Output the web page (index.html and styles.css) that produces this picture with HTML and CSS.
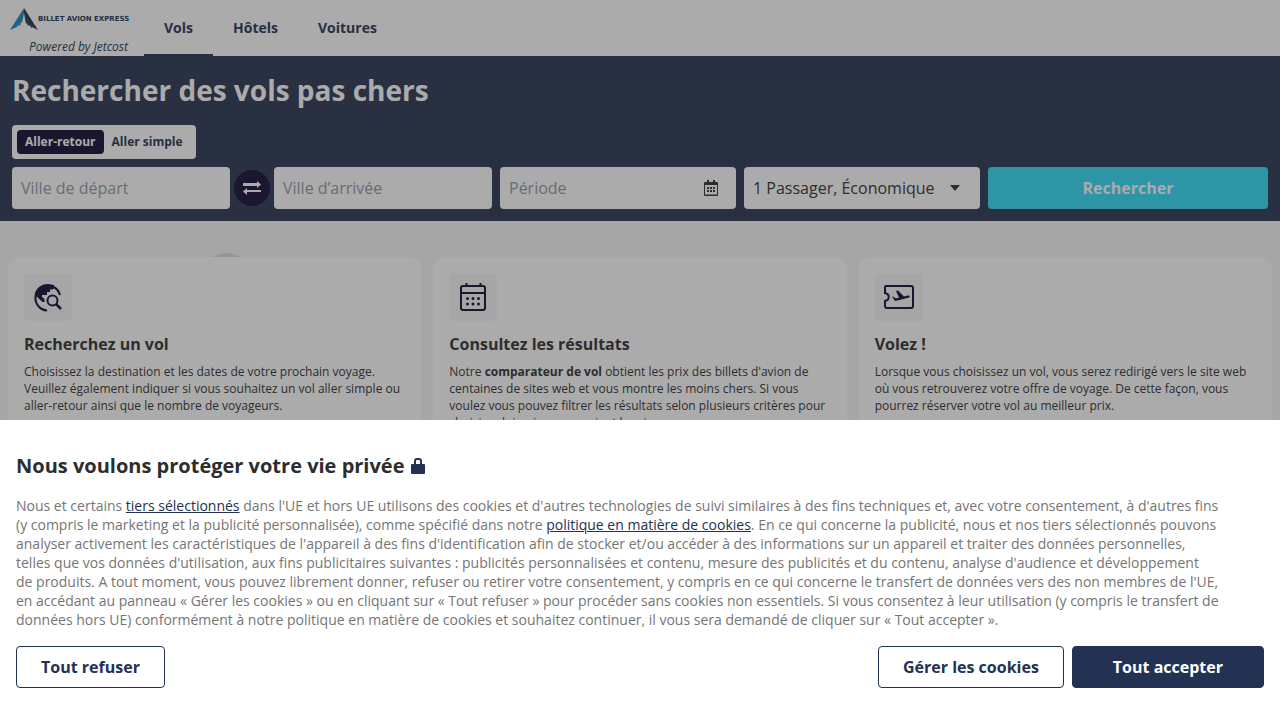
FILE: index.html
```html
<!DOCTYPE html>
<html lang="fr">
<head>
    <meta charset="UTF-8">
    <meta name="viewport" content="width=device-width, initial-scale=1.0">
    <title>Billet Avion Express</title>
    <link rel="stylesheet" href="styles.css">
</head>
<body>
    <header class="header">
        <a href="#" class="brand">
            <span class="logo">
                <svg class="logo-mark" viewBox="0 0 28 22" aria-hidden="true">
                    <path fill="#1687bd" d="M14 0 L0 22 L7 19 L8 17 L10 18 L11 14 L12 15 L14 5z"/>
                    <path fill="#233152" d="M14 0 L28 22 L22 19 L21 20 L20 17 L18 18 L17 15 L16 16 L14 5z"/>
                </svg>
                <span class="logo-name">BILLET AVION EXPRESS</span>
            </span>
            <span class="powered">Powered by Jetcost</span>
        </a>
        <nav class="nav">
            <a href="#" class="active">Vols</a>
            <a href="#">Hôtels</a>
            <a href="#">Voitures</a>
        </nav>
    </header>

    <section class="search">
        <h1>Rechercher des vols pas chers</h1>
        <form>
            <div class="trip-type">
                <label><input type="radio" name="trip" checked><span>Aller-retour</span></label>
                <label><input type="radio" name="trip"><span>Aller simple</span></label>
            </div>
            <div class="search-row">
                <div class="route">
                    <input class="field" type="text" placeholder="Ville de départ" aria-label="Ville de départ">
                    <button type="button" class="swap" aria-label="Inverser les villes">
                        <svg viewBox="0 0 18 14" fill="currentColor" aria-hidden="true">
                            <path d="M0 2h14V0l4 3.500L14 7V5H0z"/>
                            <path d="M18 9H4V7L0 10.500 4 14v-3h14z"/>
                        </svg>
                    </button>
                    <input class="field" type="text" placeholder="Ville d’arrivée" aria-label="Ville d’arrivée">
                </div>
                <div class="with-icon">
                    <input class="field" type="text" placeholder="Période" aria-label="Période">
                    <svg class="icon-calendar" viewBox="0 0 14 16" aria-hidden="true">
                        <path fill="#2d2d2d" fill-rule="evenodd" d="M3 0h2v2h4V0h2v2h2a1 1 0 0 1 1 1v12a1 1 0 0 1-1 1H1a1 1 0 0 1-1-1V3a1 1 0 0 1 1-1h2zM1 5v9.500h12V5z"/>
                        <path fill="#2d2d2d" d="M3 7h2v2H3zM6 7h2v2H6zM9 7h2v2H9zM3 10h2v2H3zM6 10h2v2H6zM9 10h2v2H9z"/>
                    </svg>
                </div>
                <div class="with-icon">
                    <select class="field" aria-label="Passagers et classe">
                        <option>1 Passager, Économique</option>
                    </select>
                    <svg class="icon-caret" viewBox="0 0 10 6" aria-hidden="true"><path fill="#2d2d2d" d="M0 0h10L5 6z"/></svg>
                </div>
                <button type="submit" class="submit">Rechercher</button>
            </div>
        </form>
    </section>

    <main class="steps">
        <article class="card">
            <div class="card-icon">
                <svg viewBox="0 0 32 32" fill="none" stroke="#0f0732" stroke-width="2" aria-hidden="true">
                    <path d="M15 29.500A12.500 12.500 0 1 1 28 14"/>
                    <path fill="#0f0732" stroke="none" d="M16 3C8 3 2.500 9.500 3 14l7.500 7h2v-3l-2.500-2v-2h5v-3h3V8.500h2.500l1.500-1V4z"/>
                    <circle cx="20.500" cy="19.500" r="5"/>
                    <path stroke-width="2.500" d="M24 23l5 5"/>
                </svg>
            </div>
            <h2>Recherchez un vol</h2>
            <p>Choisissez la destination et les dates de votre prochain voyage. Veuillez également indiquer si vous souhaitez un vol aller simple ou aller-retour ainsi que le nombre de voyageurs.</p>
        </article>
        <article class="card">
            <div class="card-icon">
                <svg viewBox="0 0 32 32" fill="none" stroke="#0f0732" stroke-width="2" aria-hidden="true">
                    <rect x="4" y="5" width="24" height="24" rx="2"/>
                    <path d="M4 12h24M9.500 2v3M23.500 2v3"/>
                    <path stroke-width="3" stroke-linecap="round" stroke-dasharray="0 5.500" d="M10.500 17.500h12M10.500 23h12"/>
                </svg>
            </div>
            <h2>Consultez les résultats</h2>
            <p>Notre <strong>comparateur de vol</strong> obtient les prix des billets d'avion de centaines de sites web et vous montre les moins chers. Si vous voulez vous pouvez filtrer les résultats selon plusieurs critères pour choisir celui qui vous convient le mieux.</p>
        </article>
        <article class="card">
            <div class="card-icon">
                <svg viewBox="0 0 32 32" fill="none" stroke="#0f0732" stroke-width="2" aria-hidden="true">
                    <path d="M3 5h25a2 2 0 0 1 2 2v18a2 2 0 0 1-2 2H4a2 2 0 0 1-2-2v-5c5-1 5-7 0-8V6a1 1 0 0 1 1-1z"/>
                    <path fill="#0f0732" stroke="none" d="M9 15.500l2 .5 2 1.500 3-1-3-6.500 2-.5 6 6 3.500-1c2.500-.5 3 1.500 1 2.200L12 20z"/>
                </svg>
            </div>
            <h2>Volez !</h2>
            <p>Lorsque vous choisissez un vol, vous serez redirigé vers le site web où vous retrouverez votre offre de voyage. De cette façon, vous pourrez réserver votre vol au meilleur prix.</p>
        </article>
    </main>

    <div class="overlay"></div>
    <section class="cookies" role="dialog" aria-labelledby="cookies-title">
        <h2 id="cookies-title">Nous voulons protéger votre vie privée
            <svg viewBox="0 0 14 16" aria-hidden="true">
                <path fill="#233152" fill-rule="evenodd" d="M3 6V3a3 3 0 0 1 3-3h2a3 3 0 0 1 3 3v3h2a1 1 0 0 1 1 1v8a1 1 0 0 1-1 1H1a1 1 0 0 1-1-1V7a1 1 0 0 1 1-1zM5 6h4V3a1 1 0 0 0-1-1H6a1 1 0 0 0-1 1z"/>
            </svg>
        </h2>
        <p>Nous et certains <a href="#">tiers sélectionnés</a> dans l'UE et hors UE utilisons des cookies et d'autres technologies de suivi similaires à des fins techniques et, avec votre consentement, à d'autres fins (y compris le marketing et la publicité personnalisée), comme spécifié dans notre <a href="#">politique en matière de cookies</a>. En ce qui concerne la publicité, nous et nos tiers sélectionnés pouvons analyser activement les caractéristiques de l'appareil à des fins d'identification afin de stocker et/ou accéder à des informations sur un appareil et traiter des données personnelles, telles que vos données d'utilisation, aux fins publicitaires suivantes : publicités personnalisées et contenu, mesure des publicités et du contenu, analyse d'audience et développement de&nbsp;produits. A tout moment, vous pouvez librement donner, refuser ou retirer votre consentement, y compris en ce qui concerne le transfert de données vers des non membres de l'UE, en accédant au panneau « Gérer les cookies » ou en cliquant sur « Tout refuser » pour procéder sans cookies non essentiels. Si vous consentez à leur utilisation (y compris le transfert de données hors UE) conformément à notre politique en matière de cookies et souhaitez continuer, il vous sera demandé de cliquer sur « Tout accepter ».</p>
        <div class="actions">
            <button type="button" class="btn refuse">Tout refuser</button>
            <button type="button" class="btn">Gérer les cookies</button>
            <button type="button" class="btn primary">Tout accepter</button>
        </div>
    </section>
</body>
</html>
```
FILE: styles.css
```css
* {
    box-sizing: border-box;
    margin: 0;
    padding: 0;
}

body {
    font-family: "Open Sans", sans-serif;
    font-size: 16px;
    color: #2d2d2d;
    background-color: #f7f7f7;
    overflow: hidden;
}

input,
select,
button {
    font: inherit;
}

button {
    cursor: pointer;
}

/* Header */
.header {
    display: flex;
    height: 56px;
    background-color: #fff;
}

.brand {
    display: flex;
    flex-direction: column;
    justify-content: space-between;
    width: 128px;
    padding-top: 8px;
    color: #233152;
    text-decoration: none;
}

.logo {
    display: flex;
    align-items: center;
    padding-left: 10px;
}

.logo-mark {
    flex: none;
    width: 28px;
    height: 22px;
}

.logo-name {
    font-family: "DejaVu Sans", sans-serif;
    font-size: 7px;
    font-weight: bold;
    white-space: nowrap;
}

.powered {
    font-size: 12px;
    font-style: italic;
    line-height: 18px;
    text-align: right;
}

.nav {
    display: flex;
    margin-left: 16px;
}

.nav a {
    display: flex;
    align-items: center;
    padding: 0 20px;
    border-bottom: 2px solid transparent;
    color: #233152;
    font-size: 14px;
    font-weight: 700;
    text-decoration: none;
}

.nav a.active {
    border-bottom-color: #233152;
}

/* Search form */
.search {
    padding: 12px;
    background-color: #253250;
}

.search h1 {
    margin-bottom: 12px;
    color: #fff;
    font-size: 28px;
    line-height: 45px;
}

.trip-type {
    display: inline-flex;
    margin-bottom: 8px;
    padding: 5px;
    border-radius: 4px;
    background-color: #fff;
    vertical-align: top;
}

.trip-type input {
    position: absolute;
    opacity: 0;
}

.trip-type span {
    display: block;
    padding: 0 8px;
    border-radius: 4px;
    color: #233152;
    font-size: 12px;
    font-weight: 700;
    line-height: 24px;
    cursor: pointer;
}

.trip-type input:checked + span {
    background-color: #0f0732;
    color: #fff;
}

.search-row {
    display: grid;
    grid-template-columns: 480fr 236fr 236fr 280fr;
    gap: 8px;
}

.route {
    display: flex;
    align-items: center;
    gap: 4px;
}

.field {
    width: 100%;
    min-width: 0;
    height: 42px;
    padding: 0 9px;
    border: none;
    border-radius: 4px;
    background-color: #fff;
    color: #2d2d2d;
    appearance: none;
}

.field::placeholder {
    color: #8f98a5;
    opacity: 1;
}

.swap {
    display: flex;
    flex: none;
    align-items: center;
    justify-content: center;
    width: 36px;
    height: 36px;
    border: none;
    border-radius: 50%;
    background-color: #0f0732;
    color: #fff;
}

.swap svg {
    width: 18px;
    height: 14px;
}

.with-icon {
    position: relative;
}

.with-icon svg {
    position: absolute;
    top: 0;
    bottom: 0;
    margin: auto 0;
    pointer-events: none;
}

.icon-calendar {
    right: 18px;
    width: 14px;
    height: 16px;
}

.icon-caret {
    right: 20px;
    width: 10px;
    height: 6px;
}

.submit {
    border: none;
    border-radius: 4px;
    background-color: #2fdaf7;
    color: #fff;
    font-weight: 700;
}

/* Steps */
.steps {
    display: grid;
    grid-template-columns: repeat(3, 1fr);
    gap: 12px;
    position: relative;
    padding: 36px 8px;
}

.steps::before {
    content: "";
    position: absolute;
    top: 32px;
    left: 201px;
    width: 52px;
    height: 52px;
    border-radius: 50%;
    background-color: #dcdde2;
}

.card {
    position: relative;
    padding: 16px;
    border-radius: 12px;
    background-color: #fff;
}

.card-icon {
    display: flex;
    align-items: center;
    justify-content: center;
    width: 48px;
    height: 48px;
    margin-bottom: 12px;
    border-radius: 4px;
    background-color: #f7f7f7;
}

.card-icon svg {
    width: 32px;
    height: 32px;
}

.card h2 {
    margin-bottom: 8px;
    font-size: 16px;
    line-height: 22px;
}

.card p {
    font-size: 12px;
    line-height: 17px;
}

/* Cookie banner */
.overlay {
    position: fixed;
    inset: 0;
    background-color: rgba(45, 45, 45, 0.4);
}

.cookies {
    position: fixed;
    right: 0;
    bottom: 0;
    left: 0;
    padding: 32px 16px;
    background-color: #fff;
}

.cookies h2 {
    display: flex;
    align-items: center;
    gap: 6px;
    margin-bottom: 16px;
    font-size: 20px;
    line-height: 28px;
}

.cookies h2 svg {
    width: 14px;
    height: 16px;
}

.cookies p {
    margin-bottom: 17px;
    padding-right: 42px;
    color: #757575;
    font-size: 14px;
    line-height: 19px;
}

.cookies a {
    color: #233152;
}

.actions {
    display: flex;
    gap: 8px;
}

.btn {
    height: 42px;
    padding: 0 24px;
    border: 1px solid #233152;
    border-radius: 4px;
    background-color: #fff;
    color: #233152;
    font-weight: 700;
}

.btn.refuse {
    margin-right: auto;
}

.btn.primary {
    padding: 0 40px;
    background-color: #233152;
    color: #fff;
}
```
